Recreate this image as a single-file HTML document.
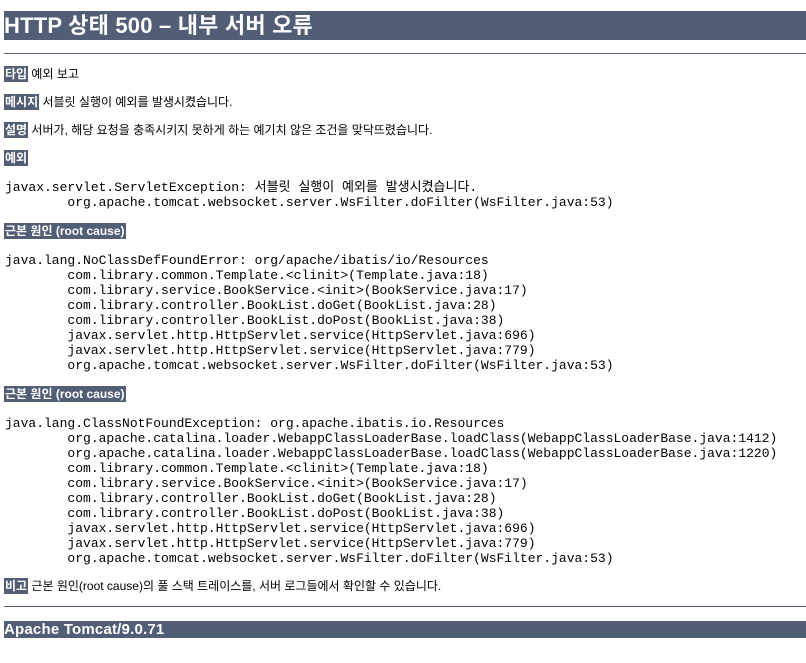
<!DOCTYPE html>
<html><head><meta charset="utf-8"><style>
body{margin:0;width:806px;height:663px;background:#fff;position:relative;overflow:hidden;font-family:"Liberation Sans","Noto Sans CJK KR",sans-serif;color:#000}
.a{position:absolute;left:4px;white-space:pre}
.h1{top:11px;height:29px;width:802px;background:#525D76;color:#fff;font-weight:bold;font-size:22px;line-height:29px;letter-spacing:0.2px}
.hr{height:1px;width:802px;background:#525D76}
.p{font-size:12px;line-height:16px}
.b{background:#525D76;color:#fff;font-weight:bold;padding:1px 1px}
.pre{font-family:"Liberation Mono","Noto Sans CJK KR",monospace;font-size:13px;line-height:15px;left:5px}
.ft{top:621px;height:17px;width:802px;background:#525D76;color:#fff;font-weight:bold;font-size:15px;line-height:17px;letter-spacing:0.2px}
</style></head><body>
<div class="a h1">HTTP 상태 500 – 내부 서버 오류</div>
<div class="a hr" style="top:53px"></div>
<div class="a p" style="top:66px"><span class="b">타입</span> 예외 보고</div>
<div class="a p" style="top:94px"><span class="b">메시지</span> 서블릿 실행이 예외를 발생시켰습니다.</div>
<div class="a p" style="top:122px"><span class="b">설명</span> 서버가, 해당 요청을 충족시키지 못하게 하는 예기치 않은 조건을 맞닥뜨렸습니다.</div>
<div class="a p" style="top:150px"><span class="b">예외</span></div>
<div class="a pre" style="top:180px">javax.servlet.ServletException: 서블릿 실행이 예외를 발생시켰습니다.
	org.apache.tomcat.websocket.server.WsFilter.doFilter(WsFilter.java:53)</div>
<div class="a p" style="top:223px"><span class="b">근본 원인 (root cause)</span></div>
<div class="a pre" style="top:253px">java.lang.NoClassDefFoundError: org/apache/ibatis/io/Resources
	com.library.common.Template.&lt;clinit&gt;(Template.java:18)
	com.library.service.BookService.&lt;init&gt;(BookService.java:17)
	com.library.controller.BookList.doGet(BookList.java:28)
	com.library.controller.BookList.doPost(BookList.java:38)
	javax.servlet.http.HttpServlet.service(HttpServlet.java:696)
	javax.servlet.http.HttpServlet.service(HttpServlet.java:779)
	org.apache.tomcat.websocket.server.WsFilter.doFilter(WsFilter.java:53)</div>
<div class="a p" style="top:386px"><span class="b">근본 원인 (root cause)</span></div>
<div class="a pre" style="top:416px">java.lang.ClassNotFoundException: org.apache.ibatis.io.Resources
	org.apache.catalina.loader.WebappClassLoaderBase.loadClass(WebappClassLoaderBase.java:1412)
	org.apache.catalina.loader.WebappClassLoaderBase.loadClass(WebappClassLoaderBase.java:1220)
	com.library.common.Template.&lt;clinit&gt;(Template.java:18)
	com.library.service.BookService.&lt;init&gt;(BookService.java:17)
	com.library.controller.BookList.doGet(BookList.java:28)
	com.library.controller.BookList.doPost(BookList.java:38)
	javax.servlet.http.HttpServlet.service(HttpServlet.java:696)
	javax.servlet.http.HttpServlet.service(HttpServlet.java:779)
	org.apache.tomcat.websocket.server.WsFilter.doFilter(WsFilter.java:53)</div>
<div class="a p" style="top:578px"><span class="b">비고</span> 근본 원인(root cause)의 풀 스택 트레이스를, 서버 로그들에서 확인할 수 있습니다.</div>
<div class="a hr" style="top:606px"></div>
<div class="a ft">Apache Tomcat/9.0.71</div>
</body></html>
